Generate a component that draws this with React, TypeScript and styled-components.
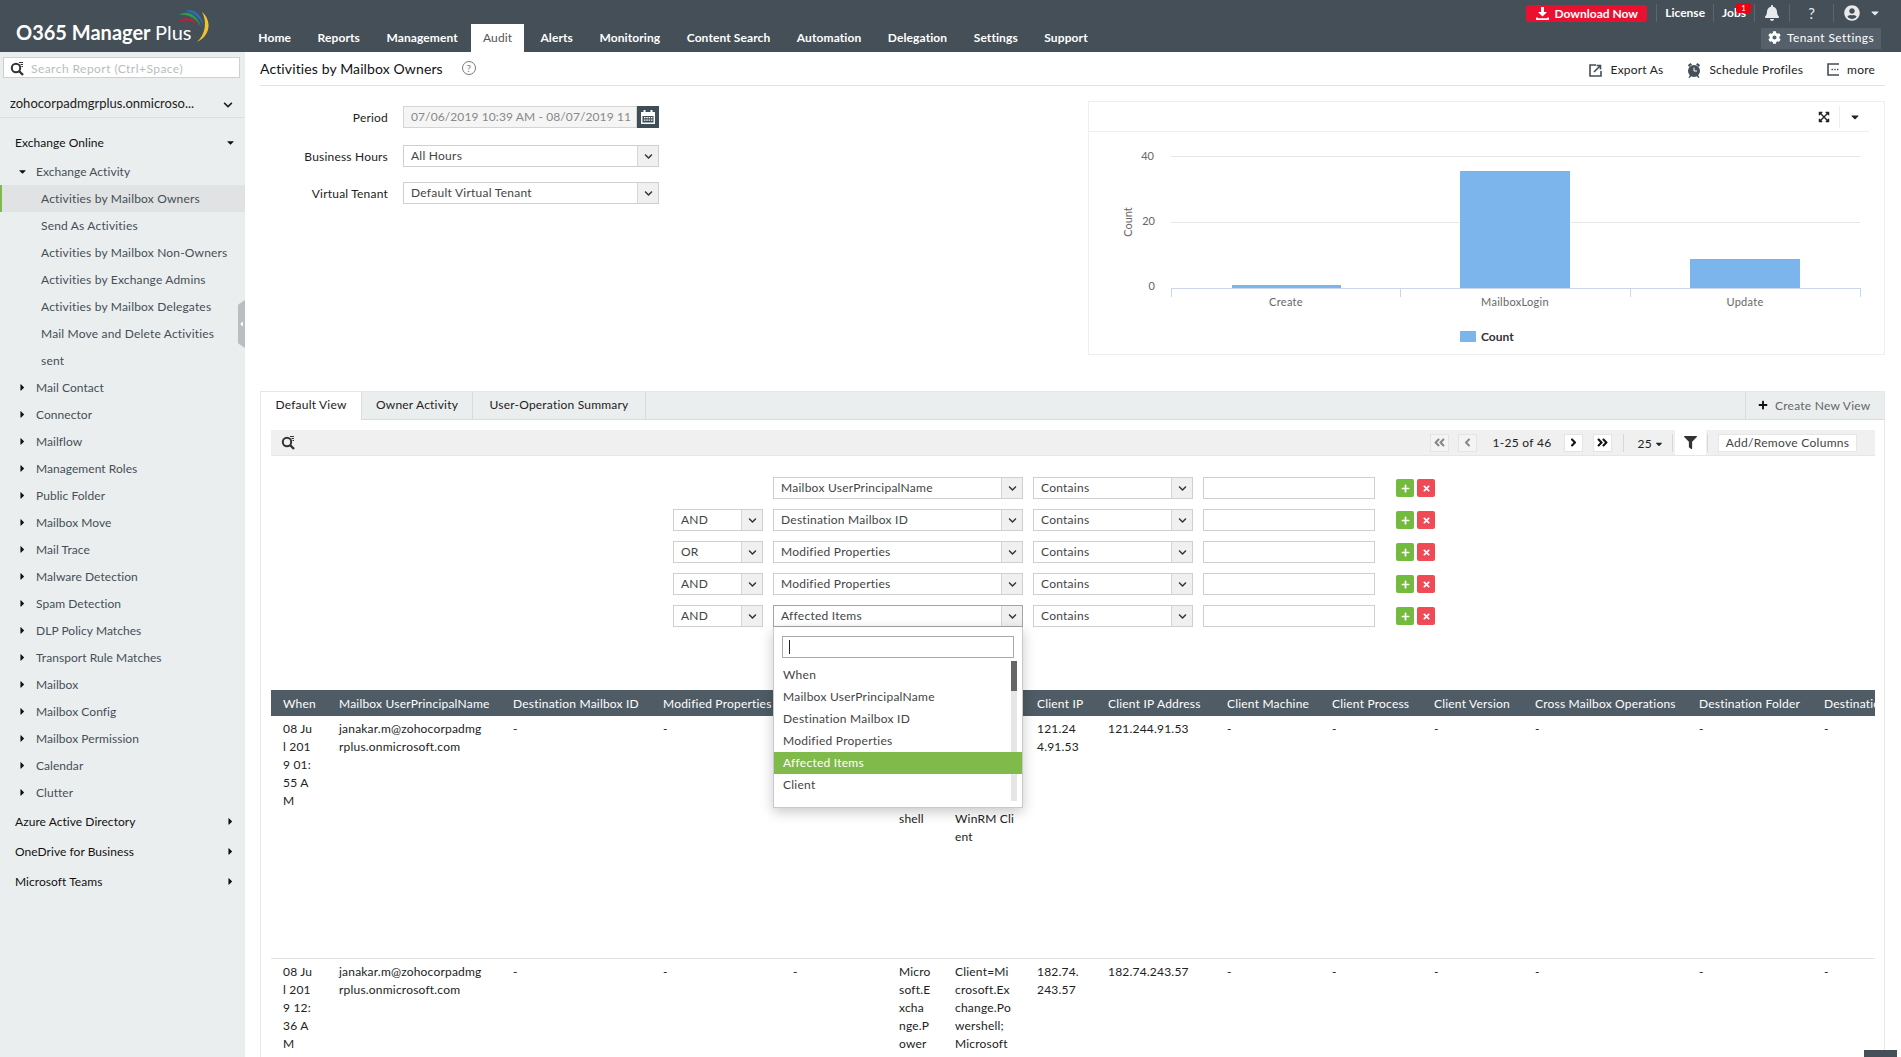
import React from 'react';
import styled, { createGlobalStyle } from 'styled-components';
import { FaBell, FaUserCircle, FaCog, FaFilter, FaExpandArrowsAlt, FaPlus, FaTimes, FaAngleLeft, FaAngleRight, FaAngleDoubleLeft, FaAngleDoubleRight, FaChevronDown, FaCaretDown, FaCaretRight, FaCaretLeft } from 'react-icons/fa';

const Global = createGlobalStyle`
  html, body { margin: 0; padding: 0; height: 100%; overflow: hidden; background: #fff; }
  body { font-family: Lato, "Open Sans", sans-serif; font-size: 12px; color: #222; }
  * { box-sizing: border-box; }
`;

const Page = styled.div`width: 1901px; height: 1057px; overflow: hidden; display: flex; flex-direction: column; position: relative;`;
const Header = styled.header`height: 52px; background: #444f57; display: flex; flex: none; color: #fff;`;
const Logo = styled.div`width: 258px; flex: none; position: relative; padding: 18px 0 0 16px; font-size: 20px; line-height: 28px; font-weight: 700; white-space: nowrap;
  span { font-weight: 400; }
  svg { position: absolute; left: 170px; top: 5px; }`;
const Nav = styled.nav`display: flex; align-self: flex-end; flex: 1; height: 28px; margin-left: -13px;`;
const NavItem = styled.div<{ $active?: boolean }>`padding: 3px ${p => (p.$active ? '12px' : '13.25px')} 0; margin-right: ${p => (p.$active ? '3px' : '0')}; line-height: 22px; font-weight: ${p => (p.$active ? 400 : 700)}; letter-spacing: 0.1px; background: ${p => (p.$active ? '#fff' : 'transparent')}; color: ${p => (p.$active ? '#555' : '#fff')}; font-size: 12px;`;
const HeaderRight = styled.div`flex: none; display: flex; flex-direction: column; align-items: flex-end; padding-right: 20px;`;
const TopUtil = styled.div`display: flex; align-items: center; height: 28px; padding-bottom: 2px;`;
const DownloadBtn = styled.div`width: 121px; height: 17px; border-radius: 3px; background: #ec0f30; display: flex; align-items: center; justify-content: center; gap: 6px; font-weight: 700; font-size: 12px; margin-right: 9px;`;
const UtilSep = styled.i`display: block; width: 1px; height: 18px; background: #5b666e;`;
const UtilText = styled.div`padding: 0 8px; position: relative; line-height: 20px; font-size: 12px; font-weight: 700;`;
const Badge = styled.b`position: absolute; left: 22px; top: 0; width: 15px; height: 10px; border-radius: 2px; background: #f2000f; color: #fff; font-size: 8px; font-weight: 400; line-height: 10px; text-align: center;`;
const UtilIcon = styled.div<{ $w: number }>`width: ${p => p.$w}px; display: flex; align-items: center; justify-content: center; font-size: 16px; color: #e8eaeb;`;
const HelpGlyph = styled(UtilIcon)`font-size: 15px;`;
const TenantBtn = styled.div`width: 120px; height: 21px; background: #55606a; display: flex; align-items: center; gap: 6px; padding: 0 0 2px 7px; font-size: 12px; font-weight: 400; letter-spacing: 0.4px;`;

const Body = styled.div`display: flex; flex: 1; min-height: 0;`;
const Sidebar = styled.aside`width: 245px; flex: none; background: #ebeeef; padding-top: 5px; position: relative;`;
const SearchBox = styled.div`margin: 0 5px 0 3px; height: 21px; background: #fff; border: 1px solid #ccd0d2; display: flex; align-items: center; padding: 1px 0 0 6px; gap: 6px; color: #b8bcbe; font-size: 12px; letter-spacing: 0.45px;`;
const TenantRow = styled.div`height: 40px; border-bottom: 1px solid #dcdfe0; padding: 16px 12px 0 10px; display: flex; justify-content: space-between; font-size: 13px; line-height: 18px; color: #222;
  svg { margin-top: 6px; font-size: 10px; }`;
const Tree = styled.div`margin-top: 10px;`;
const TopRow = styled.div`height: 30px; padding: 0 9px 0 15px; display: flex; align-items: center; justify-content: space-between; color: #111; font-size: 12px; letter-spacing: 0.05px;
  &:first-child { padding-bottom: 2px; }
  svg { font-size: 11px; }`;
const GroupRow = styled.div`height: 27px; display: flex; align-items: center; gap: 9px; padding-left: 18px; color: #454f57; letter-spacing: 0.05px;
  svg { font-size: 11px; width: 9px; color: #111; }`;
const LeafRow = styled.div<{ $sel?: boolean }>`height: 27px; display: flex; align-items: center; padding-left: ${p => (p.$sel ? '39px' : '41px')}; color: #454f57; background: ${p => (p.$sel ? '#e0e2e3' : 'transparent')}; border-left: ${p => (p.$sel ? '2px solid #7fba4c' : '0')}; letter-spacing: 0.18px;`;
const Collapse = styled.div`position: absolute; right: 0; top: 248px; width: 7px; height: 48px; background: #b9bec1; clip-path: polygon(100% 0, 100% 100%, 0 90%, 0 10%); display: flex; align-items: center; color: #fff; font-size: 8px;`;

const Main = styled.main`flex: 1; min-width: 0; padding: 0 16px 0 15px; display: flex; flex-direction: column;`;
const TitleBar = styled.div`height: 34px; flex: none; border-bottom: 1px solid #e3e3e3; display: flex; align-items: center; padding-bottom: 1px;`;
const Title = styled.h1`margin: 0; font-size: 14px; font-weight: 400; color: #111; letter-spacing: 0.12px;`;
const Help = styled.span`margin-left: 19px; width: 14px; height: 14px; border: 1px solid #777; border-radius: 50%; color: #777; font-size: 10px; line-height: 12px; text-align: center;`;
const TitleActions = styled.div`margin-left: auto; padding: 3px 10px 0 0; display: flex; align-items: center;`;
const TitleAction = styled.div<{ $gap: number; $ml?: number }>`display: flex; align-items: center; gap: ${p => p.$gap}px; margin-left: ${p => p.$ml ?? 0}px; color: #222; letter-spacing: 0.2px;`;

const Upper = styled.div`display: flex; justify-content: space-between; margin-top: 15px; height: 254px; flex: none;`;
const Form = styled.div`padding-top: 5px; display: flex; flex-direction: column;`;
const FormRow = styled.div<{ $mb: number }>`display: flex; align-items: center; height: 22px; margin-bottom: ${p => p.$mb}px;`;
const FormLabel = styled.label`width: 128px; text-align: right; margin-right: 15px; color: #222; letter-spacing: 0.2px;`;
const Select = styled.div<{ $w: number; $active?: boolean }>`width: ${p => p.$w}px; height: 22px; border: 1px solid ${p => (p.$active ? '#a5a5a5' : '#cfcfcf')}; background: #fff; display: flex; flex: none; position: relative; align-items: stretch; color: #444; letter-spacing: 0.25px;`;
const SelectValue = styled.div`flex: 1; padding-left: 7px; line-height: 20px; white-space: nowrap; overflow: hidden;`;
const SelectArrow = styled.div`width: 21px; background: #f0f0f0; border-left: 1px solid #d6d6d6; display: flex; align-items: center; justify-content: center; color: #333; font-size: 9px;`;
const PeriodInput = styled.div`width: 234px; height: 22px; border: 1px solid #d4d4d4; background: #f5f5f5; color: #888; padding-left: 7px; line-height: 20px; white-space: nowrap; overflow: hidden; letter-spacing: 0.1px;`;
const CalBtn = styled.div`width: 22px; height: 22px; background: #3f4d57; display: flex; align-items: center; justify-content: center;`;

const ChartCard = styled.section`width: 797px; border: 1px solid #eeeeee; display: flex; flex-direction: column; height: 254px;`;
const ChartTools = styled.div`height: 30px; margin-right: 15px; border-bottom: 1px solid #eeeeee; display: flex; justify-content: flex-end; align-items: center; color: #222;`;
const ChartToolBtn = styled.div<{ $w: number; $divider?: boolean }>`width: ${p => p.$w}px; height: 22px; display: flex; align-items: center; justify-content: center; font-size: 12px; border-left: ${p => (p.$divider ? '1px solid #eee' : '0')};`;

const TabPanel = styled.section`margin-top: 36px; flex: 1; border: 1px solid #e5e7e8; border-bottom: 0; min-height: 0; display: flex; flex-direction: column; position: relative; overflow: hidden;`;
const TabBar = styled.div`height: 28px; flex: none; background: #ebeeef; border-bottom: 1px solid #d9dcdd; display: flex;`;
const Tab = styled.div<{ $active?: boolean; $w: number }>`width: ${p => p.$w}px; height: ${p => (p.$active ? '28px' : '27px')}; background: ${p => (p.$active ? '#fff' : 'transparent')}; border-right: 1px solid #d9dcdd; line-height: 26px; text-align: center; color: #222; letter-spacing: 0.2px;`;
const NewView = styled.div`margin-left: auto; width: 139px; border-left: 1px solid #d9dcdd; display: flex; align-items: center; gap: 7px; padding: 0 0 1px 12px; color: #666; letter-spacing: 0.25px;
  svg { color: #111; font-size: 10px; }`;
const Inner = styled.div`padding: 10px 9px 0 10px; flex: 1; min-height: 0; display: flex; flex-direction: column;`;
const Toolbar = styled.div`height: 26px; flex: none; background: #f0f0f0; border-bottom: 1px solid #e6e6e6; display: flex; align-items: center; padding: 0 18px 0 10px;`;
const Pager = styled.div`margin-left: auto; display: flex; align-items: center;`;
const PageBtn = styled.div<{ $on?: boolean; $ml?: number }>`width: 19px; height: 18px; margin-left: ${p => p.$ml ?? 0}px; background: ${p => (p.$on ? '#fff' : '#f4f4f4')}; border: 1px solid #e4e4e4; color: ${p => (p.$on ? '#111' : '#888')}; display: flex; align-items: center; justify-content: center; font-size: 13px;`;
const PageText = styled.div`margin: 0 13px 0 15px; color: #222; letter-spacing: 0.3px; white-space: nowrap;`;
const PageSize = styled.div`margin: 2px 8px 0 13px; display: flex; align-items: center; gap: 2px; color: #222; font-size: 12px; letter-spacing: 0.3px; svg { font-size: 10px; }`;
const ToolSep = styled.i<{ $ml?: number }>`display: block; width: 1px; height: 18px; background: #d8d8d8; margin-left: ${p => p.$ml ?? 0}px;`;
const FilterTab = styled.div`width: 31px; height: 25px; margin: 0 1px 0 2px; background: #fff; align-self: flex-end; display: flex; align-items: center; justify-content: center; color: #333; font-size: 13px;`;
const AddBtn = styled.div`width: 139px; height: 18px; margin-left: 10px; background: #fff; border: 1px solid #e6e6e6; line-height: 16px; text-align: center; color: #444; letter-spacing: 0.3px;`;

const Filters = styled.div`height: 234px; flex: none; padding-top: 21px; display: flex; flex-direction: column; gap: 10px;`;
const FilterRow = styled.div`display: grid; grid-template-columns: 90px 250px 160px 172px 18px 18px; column-gap: 10px; margin-left: 402px; height: 22px; align-items: center;`;
const ValueInput = styled.div`height: 22px; border: 1px solid #cfcfcf; background: #fff;`;
const RowBtns = styled.div`display: contents;`;
const RoundBtn = styled.div<{ $bg: string; $ml: number }>`width: 18px; height: 18px; border-radius: 2px; background: ${p => p.$bg}; color: #fff; margin-left: ${p => p.$ml}px; display: flex; align-items: center; justify-content: center; font-size: 9px;`;

const Dropdown = styled.div`position: absolute; left: -1px; top: 21px; width: 250px; height: 181px; background: #fff; border: 1px solid #c9c9c9; border-top: 0; box-shadow: 0 4px 12px rgba(0,0,0,.22); z-index: 5; padding-top: 9px;`;
const DropSearch = styled.div`margin-left: 8px; width: 232px; height: 22px; border: 1px solid #aaa; display: flex; align-items: center; padding-left: 6px;
  i { display: block; width: 1px; height: 14px; background: #222; }`;
const DropList = styled.div`margin-top: 6px; position: relative;`;
const DropItem = styled.div<{ $sel?: boolean }>`height: 22px; line-height: 22px; padding-left: 9px; position: relative; z-index: 1; background: ${p => (p.$sel ? '#80ba4a' : 'transparent')}; color: ${p => (p.$sel ? '#fff' : '#444')}; letter-spacing: 0.25px;`;
const DropSpacer = styled.div`height: 5px;`;
const DropTrack = styled.div`position: absolute; right: 5px; top: -3px; width: 6px; height: 140px; background: #e6e6e6;
  &::before { content: ''; display: block; width: 6px; height: 30px; background: #666; }`;

const TableWrap = styled.div`overflow: hidden; flex: 1; min-height: 0;`;
const Table = styled.table`table-layout: fixed; width: 1654px; border-collapse: collapse;`;
const Th = styled.th`height: 26px; background: #4f5c65; color: #fff; font-weight: 400; text-align: left; padding: 0 0 0 12px; white-space: nowrap; overflow: hidden; letter-spacing: 0.2px;`;
const Tr = styled.tr<{ $h: number }>`height: ${p => p.$h}px; border-bottom: 1px solid #e3e3e3;`;
const Td = styled.td`vertical-align: top; padding: 4px 0 0 12px; line-height: 18px; color: #222; letter-spacing: 0.2px; white-space: nowrap; overflow: hidden;`;
const BackTop = styled.div`position: absolute; right: 4px; bottom: 0; width: 33px; height: 7px; background: #444f57;`;

const widths = [56, 174, 150, 130, 106, 56, 82, 71, 119, 105, 102, 101, 164, 125, 113];
const headers = ['When', 'Mailbox UserPrincipalName', 'Destination Mailbox ID', 'Modified Properties', '', '', '', 'Client IP', 'Client IP Address', 'Client Machine', 'Client Process', 'Client Version', 'Cross Mailbox Operations', 'Destination Folder', 'Destination Folder Path'];

const email = ['janakar.m@zohocorpadmg', 'rplus.onmicrosoft.com'];
const gap = '\u00a0';
const rows: { h: number; cells: string[][] }[] = [
  { h: 242, cells: [['08 Ju', 'l 201', '9 01:', '55 A', 'M'], email, ['-'], ['-'], [], [gap, gap, gap, gap, gap, 'shell'], [gap, gap, gap, gap, gap, 'WinRM Cli', 'ent'], ['121.24', '4.91.53'], ['121.244.91.53'], ['-'], ['-'], ['-'], ['-'], ['-'], ['-']] },
  { h: 243, cells: [['08 Ju', 'l 201', '9 12:', '36 A', 'M'], email, ['-'], ['-'], ['-'], ['Micro', 'soft.E', 'xcha', 'nge.P', 'ower'], ['Client=Mi', 'crosoft.Ex', 'change.Po', 'wershell;', 'Microsoft'], ['182.74.', '243.57'], ['182.74.243.57'], ['-'], ['-'], ['-'], ['-'], ['-'], ['-']] },
];

const leaves = ['Activities by Mailbox Owners', 'Send As Activities', 'Activities by Mailbox Non-Owners', 'Activities by Exchange Admins', 'Activities by Mailbox Delegates', 'Mail Move and Delete Activities', 'sent'];
const groups = ['Mail Contact', 'Connector', 'Mailflow', 'Management Roles', 'Public Folder', 'Mailbox Move', 'Mail Trace', 'Malware Detection', 'Spam Detection', 'DLP Policy Matches', 'Transport Rule Matches', 'Mailbox', 'Mailbox Config', 'Mailbox Permission', 'Calendar', 'Clutter'];
const navs = ['Home', 'Reports', 'Management', 'Audit', 'Alerts', 'Monitoring', 'Content Search', 'Automation', 'Delegation', 'Settings', 'Support'];
const filterRows = [
  { op: '', col: 'Mailbox UserPrincipalName' },
  { op: 'AND', col: 'Destination Mailbox ID' },
  { op: 'OR', col: 'Modified Properties' },
  { op: 'AND', col: 'Modified Properties' },
  { op: 'AND', col: 'Affected Items', open: true },
];
const options = ['When', 'Mailbox UserPrincipalName', 'Destination Mailbox ID', 'Modified Properties', 'Affected Items', 'Client'];

const SearchIcon = ({ color = '#333' }: { color?: string }) => (
  <svg width="15" height="15" viewBox="0 0 15 15" fill="none" stroke={color}>
    <circle cx="6" cy="7" r="4.2" strokeWidth="2" />
    <path d="M9 10l4 4" strokeWidth="2.4" />
    <path d="M9 1.5h4M10.5 3.5h2.5M11.5 5.5h1.5" strokeWidth="1" />
  </svg>
);
const ExportIcon = () => (
  <svg width="13" height="14" viewBox="0 0 13 14" fill="none" stroke="#444f57" strokeWidth="1.6">
    <path d="M7 2H1v11h11V8" />
    <path d="M5 9l6-6M7.5 2.5h4v4" />
  </svg>
);
const AlarmIcon = () => (
  <svg width="14" height="16" viewBox="0 0 14 16" fill="#444f57">
    <circle cx="7" cy="9" r="6" />
    <path d="M1 3l2.5-2L5 2.5 2 5zM13 3l-2.5-2L9 2.5 12 5zM3 13l-1.5 2.5.9.4L4.5 14zM11 13l1.5 2.5-.9.4L9.5 14z" />
    <path d="M7 5.5V9h3" fill="none" stroke="#fff" strokeWidth="1" />
  </svg>
);
const MoreIcon = () => (
  <svg width="12" height="13" viewBox="0 0 12 13" fill="none" stroke="#444f57" strokeWidth="1.6">
    <path d="M12 1H1v11h11" />
    <path d="M4.5 6.5h1.4M7.3 6.5h1.4M10 6.5h1.4" />
  </svg>
);
const CalendarIcon = () => (
  <svg width="16" height="16" viewBox="0 0 16 16" fill="#fff">
    <path d="M1 3h2.5v-2h2v2h5v-2h2v2H15v12H1zM2.5 7v6.5h11V7z" />
    <path d="M4 8h1.5v1.2H4zM6.3 8h1.5v1.2H6.3zM8.6 8h1.5v1.2H8.6zM10.9 8h1.5v1.2h-1.5zM4 10.5h1.5v1.2H4zM6.3 10.5h1.5v1.2H6.3zM8.6 10.5h1.5v1.2H8.6zM10.9 10.5h1.5v1.2h-1.5z" />
  </svg>
);
const DownloadIcon = () => (
  <svg width="13" height="13" viewBox="0 0 13 13" fill="#fff">
    <path d="M5 0h3v5h3L6.5 9.5 2 5h3zM0 10.5h1.8v.8h9.4v-.8H13V13H0z" />
  </svg>
);
const LogoArc = () => (
  <svg width="45" height="42" viewBox="0 0 45 42">
    <path d="M32 7C41 14 42 30 27 37 36 29 37 16 32 7Z" fill="#f2c12e" />
    <path d="M15 6C22 3 31 7 34 22 30 12 23 7 15 6Z" fill="#2a6fb5" />
    <path d="M9 10C16 5 27 8 31 22 26 13 18 9 9 10Z" fill="#2c9a55" />
    <path d="M7 18C13 11 23 12 28 20 22 15 14 14 7 18Z" fill="#c32032" />
  </svg>
);

const axis = '#ccd6eb', grid = '#e6e6e6', bar = '#7cb5ec', label = '#666';
const ChartSvg = () => (
  <svg width="795" height="222" viewBox="0 0 795 222" fontFamily="Lato, sans-serif" fontSize="11">
    <path d={`M82 24.5H771M82 90.5H771`} stroke={grid} />
    <path d="M82 156.5H771M82.5 156V165M311.5 156V165M541.5 156V165M771.5 156V165" stroke={axis} />
    <rect x="143" y="153" width="109" height="3" fill={bar} />
    <rect x="370" y="38" width="112" height="118" fill="#fff" />
    <rect x="371" y="39" width="110" height="117" fill={bar} />
    <rect x="601" y="127" width="110" height="29" fill={bar} />
    <g fill={label} textAnchor="end">
      <text x="65" y="28">40</text><text x="66" y="93">20</text><text x="66" y="158">0</text>
    </g>
    <text transform="translate(43 90) rotate(-90)" textAnchor="middle" fill={label}>Count</text>
    <g fill={label} textAnchor="middle" letterSpacing=".3">
      <text x="197" y="174">Create</text><text x="426" y="174">MailboxLogin</text><text x="656" y="174">Update</text>
    </g>
    <rect x="371" y="199" width="16" height="11" fill={bar} />
    <text x="392" y="209" fontWeight="700" fontSize="12" fill="#333">Count</text>
  </svg>
);

export default function App() {
  return (
    <Page>
      <Global />
      <Header>
        <Logo>O365 Manager <span>Plus</span><LogoArc /></Logo>
        <Nav>{navs.map(n => <NavItem key={n} $active={n === 'Audit'}>{n}</NavItem>)}</Nav>
        <HeaderRight>
          <TopUtil>
            <DownloadBtn><DownloadIcon />Download Now</DownloadBtn>
            <UtilSep />
            <UtilText>License</UtilText>
            <UtilSep />
            <UtilText>Jobs<Badge>1</Badge></UtilText>
            <UtilSep />
            <UtilIcon $w={34}><FaBell /></UtilIcon>
            <UtilSep />
            <HelpGlyph $w={43}>?</HelpGlyph>
            <UtilSep />
            <UtilIcon $w={35}><FaUserCircle /></UtilIcon>
            <FaCaretDown size={12} color="#e8eaeb" />
          </TopUtil>
          <TenantBtn><FaCog size={13} />Tenant Settings</TenantBtn>
        </HeaderRight>
      </Header>
      <Body>
        <Sidebar>
          <SearchBox><SearchIcon />Search Report (Ctrl+Space)</SearchBox>
          <TenantRow>zohocorpadmgrplus.onmicroso...<FaChevronDown /></TenantRow>
          <Tree>
            <TopRow>Exchange Online<FaCaretDown /></TopRow>
            <GroupRow><FaCaretDown />Exchange Activity</GroupRow>
            {leaves.map((l, i) => <LeafRow key={l} $sel={i === 0}>{l}</LeafRow>)}
            {groups.map(g => <GroupRow key={g}><FaCaretRight />{g}</GroupRow>)}
            {['Azure Active Directory', 'OneDrive for Business', 'Microsoft Teams'].map(t => <TopRow key={t}>{t}<FaCaretRight /></TopRow>)}
          </Tree>
          <Collapse><FaCaretLeft /></Collapse>
        </Sidebar>
        <Main>
          <TitleBar>
            <Title>Activities by Mailbox Owners</Title>
            <Help>?</Help>
            <TitleActions>
              <TitleAction $gap={9}><ExportIcon />Export As</TitleAction>
              <TitleAction $gap={8} $ml={24}><AlarmIcon />Schedule Profiles</TitleAction>
              <TitleAction $gap={8} $ml={24}><MoreIcon />more</TitleAction>
            </TitleActions>
          </TitleBar>
          <Upper>
            <Form>
              <FormRow $mb={17}><FormLabel>Period</FormLabel><PeriodInput>07/06/2019 10:39 AM - 08/07/2019 11</PeriodInput><CalBtn><CalendarIcon /></CalBtn></FormRow>
              <FormRow $mb={15}><FormLabel>Business Hours</FormLabel><Select $w={256}><SelectValue>All Hours</SelectValue><SelectArrow><FaChevronDown /></SelectArrow></Select></FormRow>
              <FormRow $mb={0}><FormLabel>Virtual Tenant</FormLabel><Select $w={256}><SelectValue>Default Virtual Tenant</SelectValue><SelectArrow><FaChevronDown /></SelectArrow></Select></FormRow>
            </Form>
            <ChartCard>
              <ChartTools>
                <ChartToolBtn $w={30}><FaExpandArrowsAlt /></ChartToolBtn>
                <ChartToolBtn $w={30} $divider><FaCaretDown /></ChartToolBtn>
              </ChartTools>
              <ChartSvg />
            </ChartCard>
          </Upper>
          <TabPanel>
            <TabBar>
              <Tab $active $w={101}>Default View</Tab>
              <Tab $w={111}>Owner Activity</Tab>
              <Tab $w={173}>User-Operation Summary</Tab>
              <NewView><FaPlus />Create New View</NewView>
            </TabBar>
            <Inner>
              <Toolbar>
                <SearchIcon />
                <Pager>
                  <PageBtn><FaAngleDoubleLeft /></PageBtn>
                  <PageBtn $ml={9}><FaAngleLeft /></PageBtn>
                  <PageText>1-25 of 46</PageText>
                  <PageBtn $on><FaAngleRight /></PageBtn>
                  <PageBtn $on $ml={10}><FaAngleDoubleRight /></PageBtn>
                  <ToolSep $ml={11} />
                  <PageSize>25<FaCaretDown /></PageSize>
                  <ToolSep />
                  <FilterTab><FaFilter /></FilterTab>
                  <ToolSep />
                  <AddBtn>Add/Remove Columns</AddBtn>
                </Pager>
              </Toolbar>
              <Filters>
                {filterRows.map((r, i) => (
                  <FilterRow key={i}>
                    {r.op ? <Select $w={90}><SelectValue>{r.op}</SelectValue><SelectArrow><FaChevronDown /></SelectArrow></Select> : <span />}
                    <Select $w={250} $active={r.open}>
                      <SelectValue>{r.col}</SelectValue><SelectArrow><FaChevronDown /></SelectArrow>
                      {r.open && (
                        <Dropdown>
                          <DropSearch><i /></DropSearch>
                          <DropList>
                            {options.map(o => <DropItem key={o} $sel={o === 'Affected Items'}>{o}</DropItem>)}
                            <DropSpacer />
                            <DropTrack />
                          </DropList>
                        </Dropdown>
                      )}
                    </Select>
                    <Select $w={160}><SelectValue>Contains</SelectValue><SelectArrow><FaChevronDown /></SelectArrow></Select>
                    <ValueInput />
                    <RowBtns>
                      <RoundBtn $bg="#72bb3e" $ml={11}><FaPlus /></RoundBtn>
                      <RoundBtn $bg="#ef4a56" $ml={4}><FaTimes /></RoundBtn>
                    </RowBtns>
                  </FilterRow>
                ))}
              </Filters>
              <TableWrap>
                <Table>
                  <colgroup>{widths.map((w, i) => <col key={i} width={w} />)}</colgroup>
                  <thead><tr>{headers.map((h, i) => <Th key={i}>{h}</Th>)}</tr></thead>
                  <tbody>
                    {rows.map((r, i) => (
                      <Tr key={i} $h={r.h}>
                        {r.cells.map((c, j) => <Td key={j}>{c.map((l, k) => <div key={k}>{l}</div>)}</Td>)}
                      </Tr>
                    ))}
                  </tbody>
                </Table>
              </TableWrap>
            </Inner>
          </TabPanel>
        </Main>
      </Body>
      <BackTop />
    </Page>
  );
}
